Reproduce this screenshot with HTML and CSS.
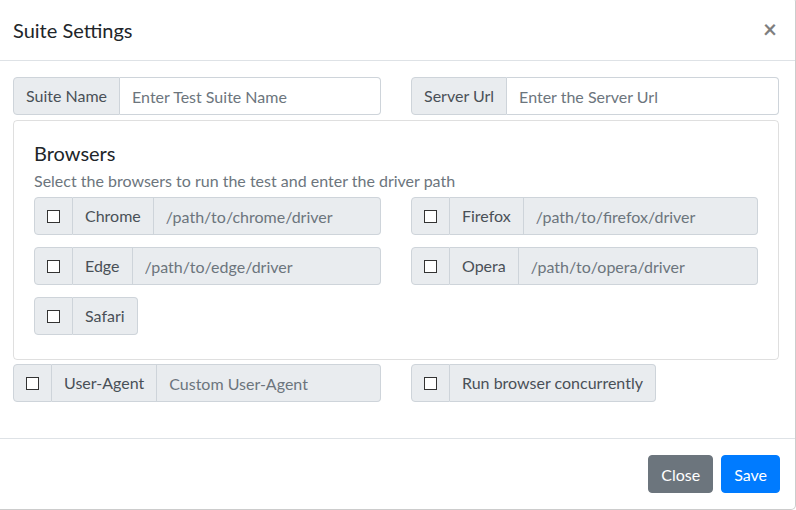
FILE: index.html
```html
<!DOCTYPE html>
<html>
<head>
<meta charset="utf-8">
<link rel="stylesheet" href="styles.css">
</head>
<body>
<div class="modal">
  <div class="modal-header">
    <h5 class="modal-title">Suite Settings</h5>
    <button class="close" type="button">×</button>
  </div>
  <div class="modal-body">
    <div class="row row-top">
      <div class="input-group">
        <span class="ig-text">Suite Name</span>
        <input class="form-control" type="text" placeholder="Enter Test Suite Name">
      </div>
      <div class="input-group">
        <span class="ig-text">Server Url</span>
        <input class="form-control" type="text" placeholder="Enter the Server Url">
      </div>
    </div>
    <div class="card">
      <h5 class="card-title">Browsers</h5>
      <p class="card-sub">Select the browsers to run the test and enter the driver path</p>
      <div class="browser-grid">
        <div class="input-group">
          <span class="ig-text ig-check"><input type="checkbox" class="cb"></span>
          <span class="ig-text">Chrome</span>
          <input class="form-control readonly" type="text" placeholder="/path/to/chrome/driver" readonly>
        </div>
        <div class="input-group">
          <span class="ig-text ig-check"><input type="checkbox" class="cb"></span>
          <span class="ig-text">Firefox</span>
          <input class="form-control readonly" type="text" placeholder="/path/to/firefox/driver" readonly>
        </div>
        <div class="input-group">
          <span class="ig-text ig-check"><input type="checkbox" class="cb"></span>
          <span class="ig-text">Edge</span>
          <input class="form-control readonly" type="text" placeholder="/path/to/edge/driver" readonly>
        </div>
        <div class="input-group">
          <span class="ig-text ig-check"><input type="checkbox" class="cb"></span>
          <span class="ig-text">Opera</span>
          <input class="form-control readonly" type="text" placeholder="/path/to/opera/driver" readonly>
        </div>
        <div class="input-group input-group-auto">
          <span class="ig-text ig-check"><input type="checkbox" class="cb"></span>
          <span class="ig-text ig-last">Safari</span>
        </div>
      </div>
    </div>
    <div class="row row-bottom">
      <div class="input-group">
        <span class="ig-text ig-check"><input type="checkbox" class="cb"></span>
        <span class="ig-text">User-Agent</span>
        <input class="form-control readonly" type="text" placeholder="Custom User-Agent" readonly>
      </div>
      <div class="input-group input-group-auto">
        <span class="ig-text ig-check"><input type="checkbox" class="cb"></span>
        <span class="ig-text ig-last">Run browser concurrently</span>
      </div>
    </div>
  </div>
  <div class="modal-footer">
    <button class="btn btn-secondary" type="button">Close</button>
    <button class="btn btn-primary" type="button">Save</button>
  </div>
</div>
</body>
</html>
```

FILE: styles.css
```css
* { box-sizing: border-box; }
html, body { margin: 0; padding: 0; background: #fff; overflow: hidden; }
body {
  font-family: Lato, "Open Sans", sans-serif;
  font-size: 16px;
  line-height: 1.5;
  color: #212529;
}
.modal {
  width: 800px;
  margin: -3px 0 0 -4px;
  border: 1px solid rgba(0,0,0,.2);
  border-radius: 5px;
  background: #fff;
}
.modal-header {
  display: flex;
  align-items: flex-start;
  justify-content: space-between;
  padding: 17px 16px 15px;
  border-bottom: 1px solid #dee2e6;
}
.modal-title {
  margin: 0;
  font-size: 20px;
  font-weight: 400;
  line-height: 30px;
}
.close {
  border: 0;
  background: transparent;
  padding: 0;
  margin: -1px 2px 0 0;
  font-family: inherit;
  font-size: 24px;
  font-weight: 700;
  line-height: 30px;
  color: #000;
  opacity: .5;
}
.modal-body { padding: 16px 16px 36px; }
.row {
  display: grid;
  grid-template-columns: minmax(0, 1fr) minmax(0, 1fr);
  column-gap: 30px;
}
.row-top { margin-bottom: 5px; }
.row-bottom { margin-top: 4px; }
.input-group {
  display: flex;
  align-items: stretch;
  height: 38px;
  min-width: 0;
}
.input-group-auto { justify-self: start; }
.ig-text {
  display: flex;
  align-items: center;
  padding: 0 12px;
  background: #e9ecef;
  border: 1px solid #ced4da;
  color: #495057;
  font-size: 16px;
  white-space: nowrap;
}
.ig-text:first-child { border-radius: 4px 0 0 4px; }
.ig-text + .ig-text { border-left: 0; }
.ig-last { border-radius: 0 4px 4px 0; }
.ig-check { padding: 0 12px; }
.cb {
  -webkit-appearance: none;
  appearance: none;
  width: 13px;
  height: 13px;
  margin: 0;
  border: 1px solid #333;
  background: #fff;
  border-radius: 0;
}
.form-control {
  flex: 1 1 0;
  width: 0;
  min-width: 0;
  padding: 0 12px;
  border: 1px solid #ced4da;
  border-left: 0;
  border-radius: 0 4px 4px 0;
  font-family: inherit;
  font-size: 16px;
  color: #495057;
  background: #fff;
  outline: none;
}
.form-control::placeholder { color: #6c757d; opacity: 1; }
.form-control.readonly { background: #e9ecef; }
.card {
  border: 1px solid rgba(0,0,0,.125);
  border-radius: 4px;
  padding: 20px 20px 24px;
}
.card-title {
  margin: 0 0 4px;
  font-size: 20px;
  font-weight: 400;
  line-height: 24px;
}
.card-sub {
  margin: 0 0 4px;
  color: #6c757d;
  line-height: 24px;
}
.browser-grid {
  display: grid;
  grid-template-columns: minmax(0, 1fr) minmax(0, 1fr);
  column-gap: 30px;
  row-gap: 12px;
}
.modal-footer {
  display: flex;
  justify-content: flex-end;
  gap: 8px;
  padding: 16px 15px 16px 16px;
  border-top: 1px solid #dee2e6;
}
.btn {
  height: 38px;
  padding: 0 12px;
  border: 1px solid transparent;
  border-radius: 4px;
  font-family: inherit;
  font-size: 16px;
  color: #fff;
}
.btn-secondary { background: #6c757d; border-color: #6c757d; }
.btn-primary { background: #007bff; border-color: #007bff; }
```
